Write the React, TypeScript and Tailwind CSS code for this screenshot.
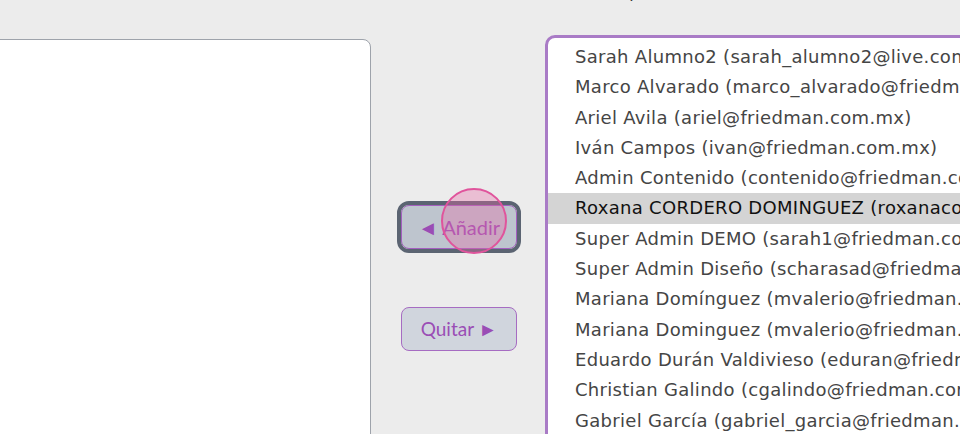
const users = [
  'Sarah Alumno2 (sarah_alumno2@live.com)',
  'Marco Alvarado (marco_alvarado@friedman.com.mx)',
  'Ariel Avila (ariel@friedman.com.mx)',
  'Iván Campos (ivan@friedman.com.mx)',
  'Admin Contenido (contenido@friedman.com.mx)',
  'Roxana CORDERO DOMINGUEZ (roxanacordero@friedman.com.mx)',
  'Super Admin DEMO (sarah1@friedman.com.mx)',
  'Super Admin Diseño (scharasad@friedman.com.mx)',
  'Mariana Domínguez (mvalerio@friedman.com.mx)',
  'Mariana Dominguez (mvalerio@friedman.com)',
  'Eduardo Durán Valdivieso (eduran@friedman.com.mx)',
  'Christian Galindo (cgalindo@friedman.com.mx)',
  'Gabriel García (gabriel_garcia@friedman.com.mx)',
  'Laura Gómez (lgomez@friedman.com.mx)',
];

const selected = 5;

export default function App() {
  return (
    <div className="h-[434px] w-[960px] overflow-hidden bg-[#ececec] font-['Open_Sans',sans-serif]">
      <div className="flex items-start">
        {/* Asignados */}
        <div className="ml-[-20px] mt-[39px] h-[420px] w-[391px] shrink-0 rounded-lg border border-[#9ea3ab] bg-white" />

        {/* Botones */}
        <div className="flex w-[174px] shrink-0 flex-col items-center gap-[58px] pl-[2px] pt-[205px]">
          <div className="relative">
            <button className="h-[44px] w-[116px] rounded-lg border border-[#a45fc0] bg-[#bec5ce] font-['Lato',sans-serif] text-[20px] text-[#9a4db5] outline-4 outline-[#5b6472]">
              ◄ Añadir
            </button>
            <div className="pointer-events-none absolute left-[40px] top-[-17px] h-[66px] w-[66px] rounded-full border-2 border-[#e0549c] bg-[#e86aa6]/35" />
          </div>
          <button className="h-[44px] w-[116px] rounded-lg border border-[#a66cc2] bg-[#d0d5dd] font-['Lato',sans-serif] text-[19px] text-[#9a4db5]">
            Quitar ►
          </button>
        </div>

        {/* Disponibles */}
        <div className="relative w-[470px] shrink-0 font-['DejaVu_Sans',sans-serif]">
          <div className="mt-[-18px] pl-[10px] text-[16px] leading-[22px] text-[#333]">Usuarios para añadir</div>
          <div className="mt-[31px] h-[420px] overflow-hidden rounded-[10px] border-[3px] border-[#a97bc6] bg-white pt-[4px]">
            {users.map((u, i) => (
              <div
                key={u}
                className={`h-[30.3px] whitespace-nowrap pl-[27px] text-[18px] leading-[30px] tracking-[0.3px] ${
                  i === selected ? 'bg-[#d4d4d4] text-[#111]' : 'text-[#454545]'
                }`}
              >
                {u}
              </div>
            ))}
          </div>
        </div>
      </div>
    </div>
  );
}
